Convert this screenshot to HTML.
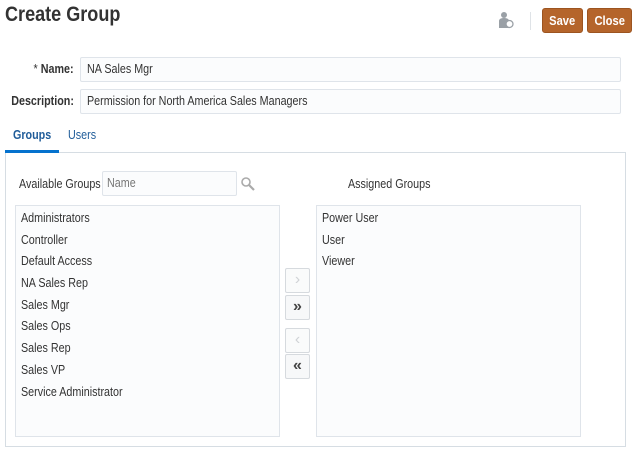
<!DOCTYPE html>
<html><head><style>
*{box-sizing:border-box;margin:0;padding:0}
body{width:638px;height:456px;background:#fff;position:relative;font-family:"Liberation Sans",sans-serif;font-size:12.5px;color:#333;overflow:hidden}
.a{position:absolute}
.n{display:inline-block;transform:scaleX(.86);transform-origin:left center;white-space:nowrap}
.title{left:5px;top:3px;font-weight:bold;font-size:21px;color:#333}
.btn{background:#b5652b;color:#fff;font-weight:bold;border:1px solid #9c5420;border-radius:3px;text-align:center;line-height:23px;font-size:13px}
.btn .n{transform-origin:center}
.inp{background:#fbfcfd;border:1px solid #dfe4ea;border-radius:2px;padding-left:6px;line-height:22px}
.lbl{font-weight:bold;text-align:right}
.lbl .n{transform-origin:right center}
.list{border:1px solid #dfe4ea;background:#fbfcfd}
.list div{height:21.7px;line-height:21.7px;padding-left:5px}
.sb{width:25px;height:25px;border:1px solid #d6dade;border-radius:2px;background:#f7f8f9;text-align:center;line-height:22px;font-size:16px}
</style></head><body>
<div class="a title"><span class="n">Create Group</span></div>
<svg class="a" style="left:498px;top:11px" width="16" height="18" viewBox="0 0 16 18"><circle cx="6" cy="4" r="3" fill="#9aa0a6"/><path d="M1 17V10c0-2 2-3 5-3s5 1 5 3v7z" fill="#9aa0a6"/><circle cx="11.5" cy="13" r="3.5" fill="#fff" stroke="#9aa0a6" stroke-width="1.3"/></svg>
<div class="a" style="left:530px;top:12px;width:1px;height:18px;background:#dfe3e7"></div>
<div class="a btn" style="left:542px;top:8px;width:41px;height:25px"><span class="n">Save</span></div>
<div class="a btn" style="left:587px;top:8px;width:45px;height:25px"><span class="n">Close</span></div>
<div class="a lbl" style="left:0;top:62px;width:74px"><span class="n"><span style="font-weight:normal">*</span> Name:</span></div>
<div class="a inp" style="left:80px;top:57px;width:541px;height:25px"><span class="n">NA Sales Mgr</span></div>
<div class="a lbl" style="left:0;top:94px;width:74px"><span class="n">Description:</span></div>
<div class="a inp" style="left:80px;top:89px;width:541px;height:25px"><span class="n">Permission for North America Sales Managers</span></div>
<div class="a" style="left:13px;top:128px;font-weight:bold;color:#1f5c99"><span class="n">Groups</span></div>
<div class="a" style="left:68px;top:128px;color:#1f5c99"><span class="n">Users</span></div>
<div class="a" style="left:5px;top:152px;width:621px;height:295px;border:1px solid #d6dde3"></div>
<div class="a" style="left:5px;top:150px;width:54px;height:3px;background:#0572ce"></div>
<div class="a" style="left:19px;top:177px"><span class="n">Available Groups</span></div>
<div class="a inp" style="left:102px;top:171px;width:135px;height:25px;color:#777;padding-left:4px"><span class="n">Name</span></div>
<svg class="a" style="left:240px;top:176px" width="16" height="16" viewBox="0 0 16 16"><circle cx="6" cy="6" r="4" fill="none" stroke="#aaa" stroke-width="1.6"/><path d="M9 9l5 5" stroke="#aaa" stroke-width="2.2"/></svg>
<div class="a" style="left:348px;top:177px"><span class="n">Assigned Groups</span></div>
<div class="a list" style="left:15px;top:205px;width:265px;height:232px;padding-top:2px">
<div><span class="n">Administrators</span></div><div><span class="n">Controller</span></div><div><span class="n">Default Access</span></div><div><span class="n">NA Sales Rep</span></div><div><span class="n">Sales Mgr</span></div><div><span class="n">Sales Ops</span></div><div><span class="n">Sales Rep</span></div><div><span class="n">Sales VP</span></div><div><span class="n">Service Administrator</span></div></div>
<div class="a list" style="left:316px;top:205px;width:265px;height:232px;padding-top:2px">
<div><span class="n">Power User</span></div><div><span class="n">User</span></div><div><span class="n">Viewer</span></div></div>
<div class="a sb" style="left:285px;top:268px;color:#d0d3d6;background:#fafbfb">&#8250;</div>
<div class="a sb" style="left:285px;top:295px;color:#444;font-weight:bold">&#187;</div>
<div class="a sb" style="left:285px;top:328px;color:#d0d3d6;background:#fafbfb">&#8249;</div>
<div class="a sb" style="left:285px;top:354px;color:#444;font-weight:bold">&#171;</div>
</body></html>
